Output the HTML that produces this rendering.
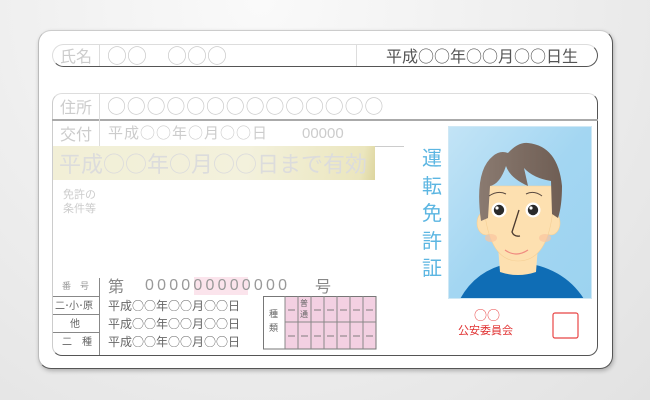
<!DOCTYPE html>
<html><head><meta charset="utf-8"><style>
*{margin:0;padding:0;box-sizing:border-box}
body{width:650px;height:400px;overflow:hidden;background:radial-gradient(ellipse at 40% 0%,#fafafa 0%,#ececec 60%,#e2e2e2 100%);font-family:"Liberation Sans","Noto Sans CJK JP",sans-serif;position:relative}
.a{position:absolute;white-space:nowrap}
.j{font-family:"Noto Sans CJK JP",sans-serif}
.card{left:38px;top:30px;width:575px;height:339px;background:#fff;border-radius:13px;border:1.5px solid;border-color:#ccc #555 #555 #bbb;box-shadow:1px 2px 4px rgba(0,0,0,.25)}
.g{color:#ccc}
.m{color:#666}
</style></head><body>
<div class="a card"></div>
<!-- name row -->
<div class="a" style="left:52px;top:44px;width:546px;height:23px;border-radius:12px;border:1px solid;border-color:#ddd #555 #555 #ddd"></div>
<div class="a" style="left:99px;top:45px;width:1px;height:21px;background:#ddd"></div>
<div class="a" style="left:356px;top:45px;width:1px;height:21px;background:#ddd"></div>
<div class="a g j" style="left:60px;top:44px;font-size:16px;line-height:22px">氏名</div>
<div class="a g j" style="left:107px;top:44px;font-size:20px;line-height:22px">○○　○○○</div>
<div class="a j" style="left:386px;top:44px;font-size:16px;line-height:22px;color:#555;letter-spacing:0">平成○○年○○月○○日生</div>
<!-- inner box -->
<div class="a" style="left:52px;top:93px;width:546px;height:263px;border-radius:10px;border:1px solid;border-color:#ddd #555 #555 #ccc"></div>
<div class="a" style="left:52px;top:119px;width:546px;height:2px;background:#aaa"></div>
<div class="a" style="left:99px;top:94px;width:1px;height:52px;background:#ddd"></div>
<div class="a g j" style="left:60px;top:95px;font-size:16px;line-height:22px">住所</div>
<div class="a g j" style="left:107px;top:95px;font-size:19px;line-height:22px;letter-spacing:.8px">○○○○○○○○○○○○○○</div>
<div class="a" style="left:53px;top:146px;width:351px;height:1px;background:#ccc"></div>
<div class="a g j" style="left:60px;top:122px;font-size:16px;line-height:22px">交付</div>
<div class="a g j" style="left:108px;top:122px;font-size:15px;line-height:22px;letter-spacing:1px">平成○○年○月○○日</div>
<div class="a g" style="left:302px;top:123px;font-size:15px;line-height:22px">00000</div>
<div class="a" style="left:53px;top:146px;width:322px;height:34px;background:linear-gradient(100deg,#f2efd6 0%,#f3f1dc 60%,#ebe6be 95%,#ddd59e 100%)"></div>
<div class="a j" style="left:59px;top:149px;font-size:22px;line-height:28px;color:#dcdcdc;letter-spacing:0">平成○○年○月○○日まで有効</div>
<div class="a g j" style="left:63px;top:187px;font-size:11px;line-height:14px">免許の<br>条件等</div>
<!-- vertical title -->
<div class="a j" style="left:422px;top:143px;font-size:20px;line-height:27.5px;color:#5cb6e2;width:24px;white-space:normal">運転免許証</div>
<!-- photo -->
<svg class="a" style="left:448px;top:126px" width="144" height="173" viewBox="0 0 144 173">
<defs><linearGradient id="bg" x1="0" y1="0" x2="1" y2="1"><stop offset="0" stop-color="#c3e4f6"/><stop offset=".5" stop-color="#a3d6f2"/><stop offset="1" stop-color="#9cd3f0"/></linearGradient>
<linearGradient id="hr" x1="0" y1="0" x2="1" y2="0"><stop offset="0" stop-color="#8a7a70"/><stop offset="1" stop-color="#6f5e54"/></linearGradient></defs>
<rect width="144" height="173" fill="url(#bg)"/>
<path d="M12 173 Q30 140 70 136 Q115 140 136 173Z" fill="#0f6db5"/>
<path d="M50 120 L52 146 Q70 152 88 146 L90 120Z" fill="#fde0b0"/>
<ellipse cx="38" cy="97" rx="9" ry="12" fill="#fde0b0" stroke="#f5cf95" stroke-width=".6"/>
<ellipse cx="103" cy="97" rx="9" ry="12" fill="#fde0b0" stroke="#f5cf95" stroke-width=".6"/>
<path d="M35 60 Q36 135 70 135 Q106 135 106 60Z" fill="#fde0b0" stroke="#f5cf95" stroke-width=".6"/>
<path d="M33 95 Q26 45 45 30 Q52 24 60 27 Q70 16 80 17 Q110 20 114 60 Q114 80 110 92 L104 88 L103 55 Q85 52 76 42 L80 60 Q62 52 58 40 Q52 58 42 60 L40 92Z" fill="url(#hr)"/>
<ellipse cx="43" cy="112" rx="6" ry="4" fill="#f9c4a0" opacity=".7"/>
<ellipse cx="97" cy="112" rx="6" ry="4" fill="#f9c4a0" opacity=".7"/>
<circle cx="51" cy="84" r="7.5" fill="#fff"/><circle cx="51" cy="84" r="5.2" fill="#2a2a2a"/><circle cx="49" cy="82" r="1.6" fill="#fff"/>
<circle cx="85" cy="84" r="7.5" fill="#fff"/><circle cx="85" cy="84" r="5.2" fill="#2a2a2a"/><circle cx="83" cy="82" r="1.6" fill="#fff"/>
<path d="M41 70 Q50 64 58 68" stroke="#5a4a40" fill="none" stroke-width="1"/>
<path d="M78 68 Q86 64 94 70" stroke="#5a4a40" fill="none" stroke-width="1"/>
<path d="M71 84 Q66 100 64 106 Q66 111 72 110" stroke="#4a3a30" fill="none" stroke-width="1.3"/>
<path d="M57 124 Q68 132 80 124" stroke="#f08b80" fill="none" stroke-width="1.2"/>
</svg>
<div class="a" style="left:448px;top:126px;width:144px;height:173px;border:1px solid #cfe8f5"></div>
<div class="a j" style="left:466px;top:308px;font-size:13px;line-height:14px;color:#e84545;text-align:center;width:42px">○○</div>
<div class="a j" style="left:458px;top:323px;font-size:11px;line-height:14px;color:#e03030">公安委員会</div>
<svg class="a" style="left:552px;top:312px" width="28" height="28"><rect x="1" y="1" width="25" height="25" rx="2" fill="none" stroke="#e84545" stroke-width="1.2"/></svg>
<!-- bottom left -->
<div class="a" style="left:99px;top:278px;width:1px;height:77px;background:#888"></div>
<div class="a" style="left:53px;top:296px;width:46px;height:1px;background:#888"></div>
<div class="a" style="left:53px;top:314px;width:46px;height:1px;background:#888"></div>
<div class="a" style="left:53px;top:332px;width:46px;height:1px;background:#888"></div>
<div class="a j" style="left:62px;top:280px;font-size:9px;line-height:12px;word-spacing:8px;color:#999">番　号</div>
<div class="a m j" style="left:55px;top:298px;font-size:10px;line-height:14px;letter-spacing:-.5px">二･小･原</div>
<div class="a m j" style="left:70px;top:316px;font-size:10px;line-height:14px">他</div>
<div class="a m j" style="left:62px;top:334px;font-size:10px;line-height:14px">二　種</div>
<div class="a j" style="left:108px;top:275px;font-size:16px;line-height:20px;color:#888">第</div>
<div class="a" style="left:194px;top:277px;width:54px;height:18px;background:#fbe4ec"></div>
<div class="a" style="left:145px;top:276px;font-size:16px;line-height:20px;color:#999;letter-spacing:3.2px">000000000000</div>
<div class="a j" style="left:315px;top:275px;font-size:16px;line-height:20px;color:#888">号</div>
<div class="a m j" style="left:108px;top:297px;font-size:12px;line-height:18px">平成○○年○○月○○日</div>
<div class="a m j" style="left:108px;top:315px;font-size:12px;line-height:18px">平成○○年○○月○○日</div>
<div class="a m j" style="left:108px;top:333px;font-size:12px;line-height:18px">平成○○年○○月○○日</div>
<!-- table -->
<svg class="a" style="left:263px;top:296px" width="114" height="54" viewBox="0 0 114 54">
<rect x="22" y="0.5" width="91" height="52.5" fill="#f3d0e2"/>
<rect x="0.5" y="0.5" width="112.5" height="52.5" fill="none" stroke="#777"/>
<g stroke="#888" stroke-width="1">
<line x1="22" y1="0" x2="22" y2="53"/><line x1="35" y1="0" x2="35" y2="53"/><line x1="48" y1="0" x2="48" y2="53"/><line x1="61" y1="0" x2="61" y2="53"/><line x1="74" y1="0" x2="74" y2="53"/><line x1="87" y1="0" x2="87" y2="53"/><line x1="100" y1="0" x2="100" y2="53"/>
<line x1="22" y1="26" x2="113" y2="26"/></g>
<g stroke="#666" stroke-width=".8">
<line x1="25" y1="14" x2="32" y2="14"/><line x1="51" y1="14" x2="58" y2="14"/><line x1="64" y1="14" x2="71" y2="14"/><line x1="77" y1="14" x2="84" y2="14"/><line x1="90" y1="14" x2="97" y2="14"/><line x1="103" y1="14" x2="110" y2="14"/>
<line x1="25" y1="40" x2="32" y2="40"/><line x1="38" y1="40" x2="45" y2="40"/><line x1="51" y1="40" x2="58" y2="40"/><line x1="64" y1="40" x2="71" y2="40"/><line x1="77" y1="40" x2="84" y2="40"/><line x1="90" y1="40" x2="97" y2="40"/><line x1="103" y1="40" x2="110" y2="40"/></g>
<text x="6" y="21" font-size="9" fill="#666" font-family="Noto Sans CJK JP,sans-serif">種</text>
<text x="6" y="35" font-size="9" fill="#666" font-family="Noto Sans CJK JP,sans-serif">類</text>
<text x="37" y="10" font-size="8" fill="#666" font-family="Noto Sans CJK JP,sans-serif">普</text>
<text x="37" y="21" font-size="8" fill="#666" font-family="Noto Sans CJK JP,sans-serif">通</text>
</svg>
</body></html>
